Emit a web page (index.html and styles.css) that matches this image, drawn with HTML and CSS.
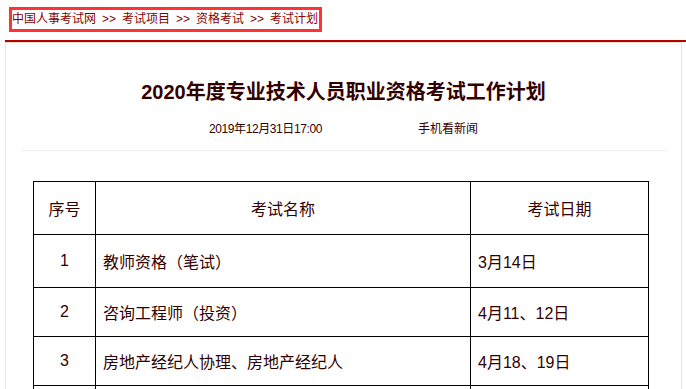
FILE: index.html
```html
<!DOCTYPE html>
<html lang="zh-CN">
<head>
<meta charset="utf-8">
<title>2020年度专业技术人员职业资格考试工作计划</title>
<link rel="stylesheet" href="styles.css">
</head>
<body>
<div class="topbar">
  <div class="crumbs">
    <span>中国人事考试网</span><span class="sep">&gt;&gt;</span><span>考试项目</span><span class="sep">&gt;&gt;</span><span>资格考试</span><span class="sep">&gt;&gt;</span><span>考试计划</span>
  </div>
</div>
<div class="rule"></div>
<div class="main">
  <div class="head">
    <h1 class="title">2020年度专业技术人员职业资格考试工作计划</h1>
    <div class="meta"><span class="date">2019年12月31日17:00</span><span>手机看新闻</span></div>
  </div>
  <table class="plan">
    <colgroup><col class="col-no"><col class="col-name"><col class="col-date"></colgroup>
    <tr class="row-tall"><td class="c">序号</td><td class="c">考试名称</td><td class="c">考试日期</td></tr>
    <tr class="row-tall"><td class="c">1</td><td>教师资格（笔试）</td><td>3月14日</td></tr>
    <tr class="row"><td class="c">2</td><td>咨询工程师（投资）</td><td>4月11、12日</td></tr>
    <tr class="row"><td class="c">3</td><td>房地产经纪人协理、房地产经纪人</td><td>4月18、19日</td></tr>
    <tr class="row"><td class="c"></td><td></td><td></td></tr>
  </table>
</div>
</body>
</html>
```

FILE: styles.css
```css
html {
  overflow: hidden;
}
body {
  margin: 0;
  background: #fff;
  color: #300;
  font-family: "Liberation Sans", "Noto Sans CJK SC", sans-serif;
}
.topbar {
  box-sizing: border-box;
  height: 40px;
  padding: 7px 0 0 9px;
}
.crumbs {
  display: inline-flex;
  align-items: center;
  box-sizing: border-box;
  height: 25px;
  border: 3px solid #f33;
  padding: 0 1px 0 0;
  font-size: 12px;
  line-height: 19px;
  color: #800;
  white-space: nowrap;
}
.sep {
  margin: 0 6px 0 6px;
}
.rule {
  margin-left: 5px;
  height: 2px;
  background: #b00;
}
.main {
  margin-left: 5px;
  width: 675px;
  min-height: 400px;
  border: 1px solid #fbe0c8;
}
.head {
  margin: 0 15px;
  padding: 34px 0 11px;
  border-bottom: 1px solid #efedf5;
  text-align: center;
}
.title {
  margin: 0;
  font-size: 20px;
  line-height: 30px;
  font-weight: bold;
  color: #300;
}
.meta {
  margin-top: 12px;
  display: flex;
  justify-content: center;
  gap: 96px;
  font-size: 12px;
  line-height: 20px;
}
.date {
  letter-spacing: -0.4px;
}
.plan {
  margin: 30px 0 0 27px;
  width: 615px;
  table-layout: fixed;
  border-collapse: collapse;
  font-size: 16px;
  color: #300;
}
.col-no { width: 62px; }
.col-name { width: 375px; }
.col-date { width: 178px; }
.plan td {
  border: 1px solid #000;
  padding: 0 7px;
  vertical-align: middle;
  white-space: nowrap;
}
.plan td.c {
  text-align: center;
}
.row-tall {
  height: 53px;
}
.row {
  height: 49px;
}
```
